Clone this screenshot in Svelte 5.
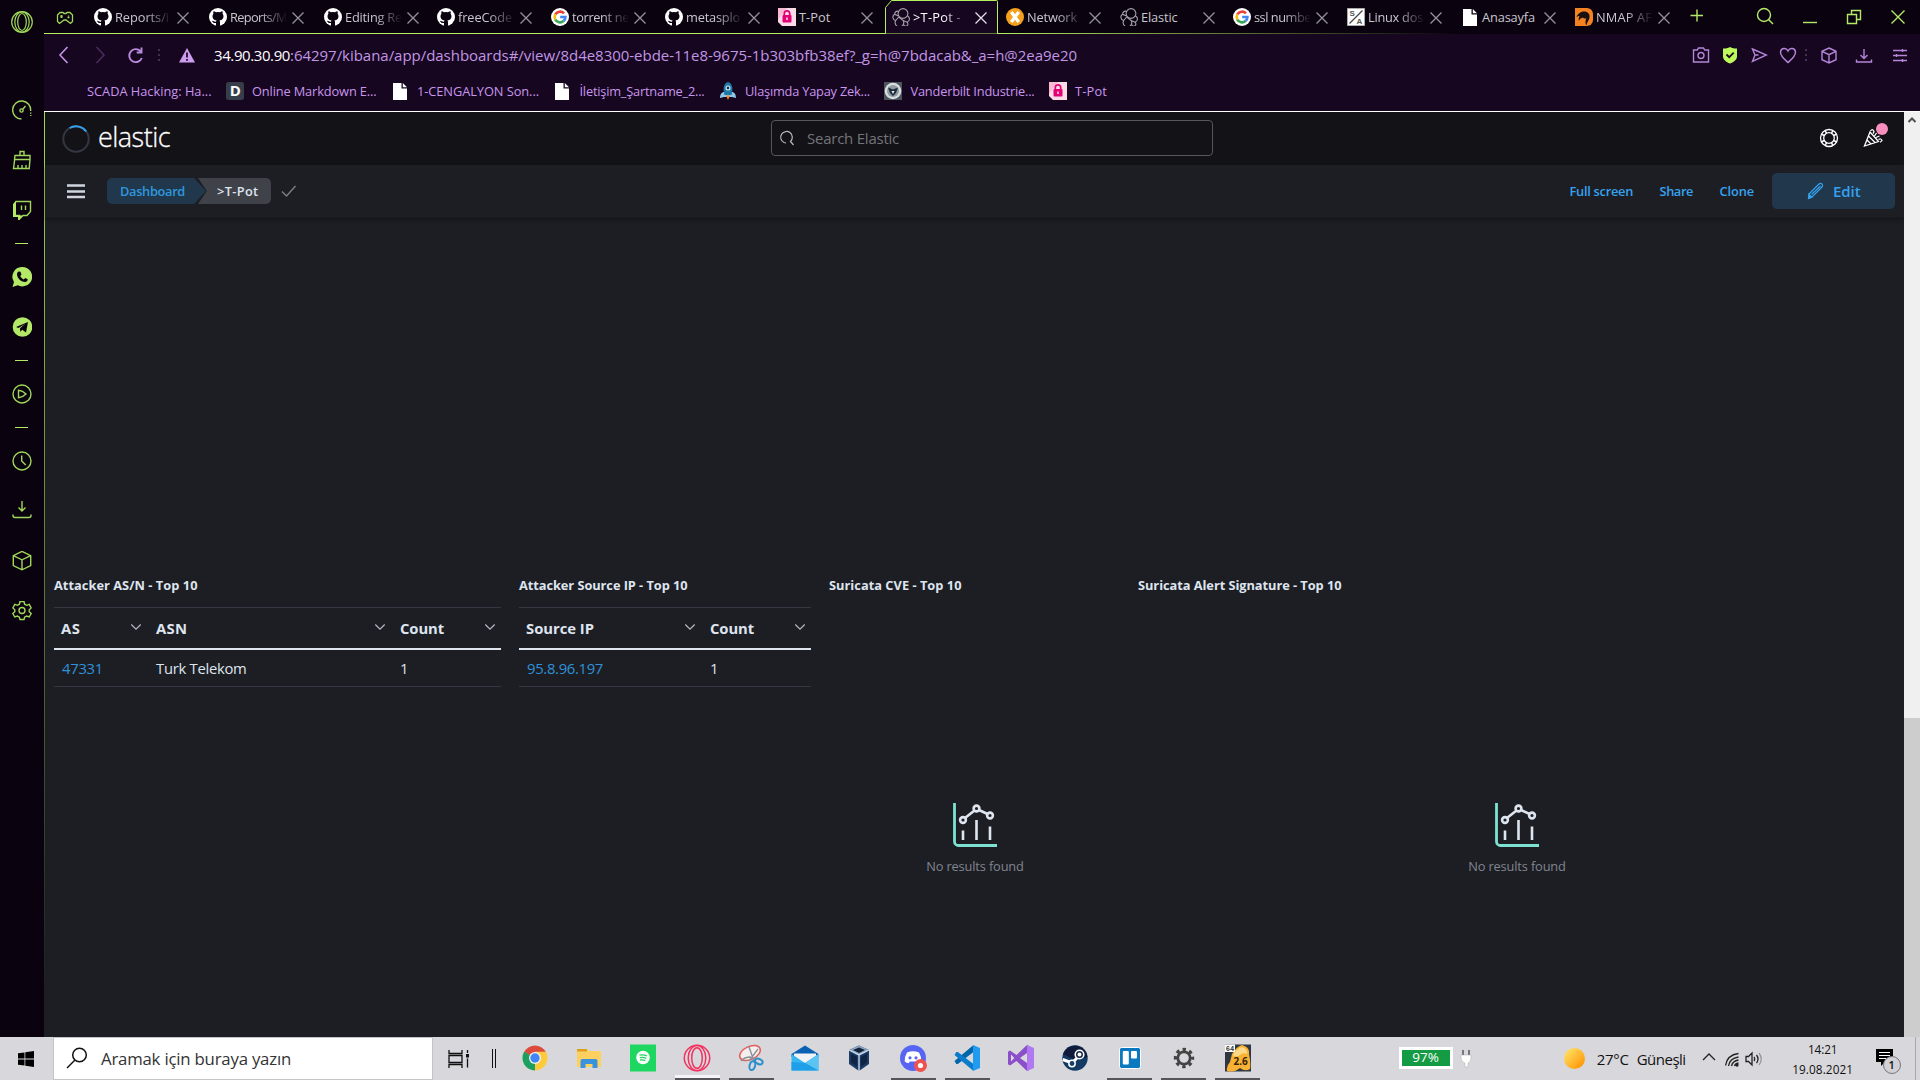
<script>
  // Tracks a text run out to a given pixel width through letter-spacing.
  function fit(node, width) {
    const natural = node.getBoundingClientRect().width;
    const count = [...node.textContent].length;
    node.style.letterSpacing = `${(width - natural) / count}px`;
  }

  const tabs = [
    { icon: 'github', text: 'Reports/i', w: 115, t: 54 },
    { icon: 'github', text: 'Reports/M', w: 115, t: 57 },
    { icon: 'github', text: 'Editing Re', w: 113, t: 57 },
    { icon: 'github', text: 'freeCode', w: 114, t: 54 },
    { icon: 'google', text: 'torrent ne', w: 114, t: 57 },
    { icon: 'github', text: 'metasplo', w: 113, t: 54 },
    { icon: 'tpot', text: 'T-Pot', w: 114, t: 31.5, full: true },
    { icon: 'elastic', text: '>T-Pot -', w: 114, t: 48, active: true },
    { icon: 'xorange', text: 'Network', w: 114, t: 50 },
    { icon: 'elastic', text: 'Elastic', w: 113, t: 36.5, full: true },
    { icon: 'google', text: 'ssl numbe', w: 114, t: 57 },
    { icon: 'sa', text: 'Linux dos', w: 114, t: 55 },
    { icon: 'page', text: 'Anasayfa', w: 114, t: 53, full: true },
    { icon: 'nmap', text: 'NMAP AF', w: 110, t: 56 }
  ];

  const bookmarks = [
    { icon: '', text: 'SCADA Hacking: Ha...', w: 124.5 },
    { icon: 'dillinger', text: 'Online Markdown E...', w: 124.5 },
    { icon: 'page', text: '1-CENGALYON Son...', w: 122 },
    { icon: 'page', text: 'İletişim_Şartname_2...', w: 125 },
    { icon: 'rocket', text: 'Ulaşımda Yapay Zek...', w: 125 },
    { icon: 'seal', text: 'Vanderbilt Industrie...', w: 124 },
    { icon: 'tpot', text: 'T-Pot', w: 32 }
  ];

  const side = ['gauge', 'broom', 'twitch', '-', 'whatsapp', 'telegram', '-', 'play', '-', 'clock', 'download', 'cube', 'gear'];

  const apps = [
    { icon: 'chrome' },
    { icon: 'explorer' },
    { icon: 'spotify' },
    { icon: 'opera', open: true, current: true },
    { icon: 'snip', open: true },
    { icon: 'mail' },
    { icon: 'vbox' },
    { icon: 'discord', open: true },
    { icon: 'vscode', open: true },
    { icon: 'vs' },
    { icon: 'steam' },
    { icon: 'trello', open: true },
    { icon: 'settings', open: true },
    { icon: 'app64', open: true }
  ];
</script>

{#snippet favicon(name)}
  <svg class="fav" viewBox="0 0 18 18" width="18" height="18">
    {#if name === 'github'}
      <circle cx="9" cy="9" r="9" fill="#fff" />
      <path d="M7 18v-3.100c-2.600.500-3.200-.900-4-2 1.700-.3 1.700 1.200 4 .8q.1-.8.6-1.200C4.500 12 3.500 10.300 3.500 8.200c0-1 .3-1.800.9-2.500-.3-.9-.2-1.700.1-2.400 1 .1 1.700.5 2.400 1a8 8 0 0 1 4.200 0c.7-.5 1.500-.9 2.400-1 .3.7.4 1.500.1 2.400.6.700.9 1.500.9 2.500 0 2.100-1 3.800-4.100 4.300q.7.600.6 2V18z" fill="#0b0410" />
    {:else if name === 'google'}
      <circle cx="9" cy="9" r="9" fill="#fff" />
      <g fill="none" stroke-width="2.600">
        <path d="M13 5.400A5.400 5.400 0 0 0 4.300 6.400" stroke="#ea4335" />
        <path d="M4.300 6.400a5.400 5.400 0 0 0 0 5.200" stroke="#fbbc05" />
        <path d="M4.300 11.600a5.400 5.400 0 0 0 8.200 1.500" stroke="#34a853" />
        <path d="M12.500 13.100A5.400 5.400 0 0 0 14.400 9H9.200" stroke="#4285f4" />
      </g>
    {:else if name === 'tpot'}
      <path d="M0 0h18v18H4L0 14z" fill="#fbdbe8" />
      <path d="M0 0h9L0 12z" fill="#f9b9d2" />
      <rect x="4.500" y="7" width="9" height="7.500" rx="1" fill="#e20074" />
      <path d="M6.300 8V5.500a2.700 2.700 0 0 1 5.400 0V8" fill="none" stroke="#e20074" stroke-width="1.700" />
      <path d="M9 9.500v2.500" stroke="#fff" stroke-width="1.300" />
    {:else if name === 'elastic'}
      <g fill="none" stroke="#a7a3ab" stroke-width="1.100">
        <circle cx="11" cy="5.500" r="4.900" />
        <path d="M6.500 3.500A2.600 2.600 0 0 0 2.700 6.300L6.500 8" />
        <path d="M2.700 6.300a3.300 3.300 0 0 0 1 6.200L6.700 9" />
        <path d="M15.500 8a3.300 3.300 0 0 1-.5 6.200l-3.800-1.700" />
        <path d="M3.700 12.500a4.300 4.300 0 1 0 7.500 0L6.700 9" />
        <path d="M11.500 15.800a2.200 2.200 0 1 0 3.500-1.600" />
      </g>
    {:else if name === 'xorange'}
      <circle cx="9" cy="9" r="9" fill="#f4a11d" />
      <path d="M5.300 4 12.700 14M12.700 4 5.300 14" stroke="#fff" stroke-width="3.200" />
    {:else if name === 'sa'}
      <path d="M.5.500h17v17H.5z" fill="#fff" stroke="#aaa" />
      <path d="M15.500 2.500l-13 13" stroke="#444" stroke-width="1.200" />
      <text x="2.500" y="8" class="sa">S</text><text x="9.500" y="16" class="sa">A</text>
    {:else if name === 'page'}
      <path d="M2 1h8.500v5.500H16V18H2z" fill="#fff" />
      <path d="M11.800 1 16 5.300h-4.200z" fill="#fff" />
    {:else if name === 'nmap'}
      <path d="M0 0h12a6 6 0 0 1 6 6v6a6 6 0 0 1-6 6H0z" fill="#f58220" />
      <path d="M1.500 9c1-3 4-5.500 7.500-5.500 4 0 6 2.500 5.500 6-.3 3-2.500 4-3 8-2-3-.5-5.500-.3-7.500-1.200 1-2.700.5-3.200-.5-1.500 1-3 .5-4 3.500-.8-2 0-4 .5-5-1.500 0-2 .5-3 1z" fill="#1a1010" />
    {:else if name === 'dillinger'}
      <rect width="18" height="18" rx="2.500" fill="#373d49" />
      <text x="3.700" y="14.300" class="dl">D</text>
    {:else if name === 'rocket'}
      <path d="M1 16c0-4 2-6 4-6h8c2 0 4 2 4 6l-4-1H5z" fill="#8fc7e8" />
      <path d="M9 0c4 1 5.500 6 3.500 13h-7C3.500 6 5 1 9 0z" fill="#1e78a8" />
      <circle cx="9" cy="6" r="2.500" fill="#d8f0fa" /><circle cx="9" cy="6" r="1.400" fill="#0c3550" />
      <path d="M7 13.500h4L9 18z" fill="#f58a2a" />
    {:else if name === 'seal'}
      <rect width="18" height="18" fill="#4c555b" />
      <circle cx="9" cy="9" r="8.300" fill="#d7dde0" /><circle cx="9" cy="9" r="6" fill="#8f9aa1" />
      <path d="M4 5.500 9 7.500 14 5.500 12 11l-3 3-3-3z" fill="#1d2c3c" /><path d="M7.500 9h3L9 12z" fill="#eef" />
    {/if}
  </svg>
{/snippet}

{#snippet sideIcon(name)}
  <svg class="sicon" viewBox="0 0 20 20" width="20" height="20">
    {#if name === 'gauge'}
      <path d="M9.500 19A9 9 0 1 1 18.600 11" /><path d="M18.700 12.500v1.200M18.700 15v1" /><circle cx="9.500" cy="10.500" r="1.600" /><path d="M10.800 9.200 13.500 6" />
    {:else if name === 'broom'}
      <path d="M8 5.500V1.500h4v4M3 5.500h15v4H2.500zM2.700 9.500 1.500 18.500h15.700l.8-9M6 18v-3M10 18v-3M14 18v-3" />
    {:else if name === 'twitch'}
      <path d="M4 1.500h14.500v10L15 15.500h-4L7.500 19v-3.500H3V3z" /><path class="solid" d="M1 4 4 1v14l3 .5h3.500L7 20H6v-3H1z" /><path d="M9.500 5.500v4.500M13.500 5.500v4.500" />
    {:else if name === 'whatsapp'}
      <path class="solid" d="M10.500 0a9.700 9.700 0 1 1-4.700 18.200L.5 20l1.500-5A9.700 9.700 0 0 1 10.500 0z" /><path class="cut" d="M6.500 4.500l2 .3 1 3-1.300 1.300c.8 1.600 1.900 2.600 3.500 3.300l1.500-1.500 2.500 1.400c.2 1.300-1 2.700-2.500 2.700C8.500 15 5.200 10.500 5 7.500c0-1.200.6-2.300 1.500-3z" />
    {:else if name === 'telegram'}
      <circle class="solid" cx="10.500" cy="10" r="9.800" /><path class="cut" d="M4 10 16 5l-2 10.500-3.700-2.700-2 2-.3-3.500L13 7l-6.500 4z" />
    {:else if name === 'play'}
      <circle cx="10" cy="10" r="9" /><path d="M6.500 6.300c3 .3 5 1.200 7.500 3.700-2.500 2.500-4.500 3.400-7.500 3.700z" />
    {:else if name === 'clock'}
      <circle cx="10" cy="10" r="9" /><path d="M9.700 4.500V10l4 4" />
    {:else if name === 'download'}
      <path d="M10 0v9.500M6.500 6.500 10 10l3.500-3.500M1 13.500v1a2 2 0 0 0 2 2h14a2 2 0 0 0 2-2v-1" />
    {:else if name === 'cube'}
      <path d="M10 .4 18.700 4.600v10L10 18.800 1.300 14.600V4.600zM1.300 4.600 10 8.800 18.700 4.600M10 8.800v10" />
    {:else if name === 'gear'}
      <circle cx="10" cy="9.500" r="3" /><path d="M8 .5h4l.6 2.700 2 1.100 2.600-.9 2 3.500-2 1.800v2l2 1.800-2 3.500-2.600-.9-2 1.100-.6 2.300H8l-.6-2.300-2-1.100-2.600.9-2-3.500 2-1.800v-2l-2-1.800 2-3.500 2.600.9 2-1.100z" />
    {/if}
  </svg>
{/snippet}

{#snippet appIcon(name)}
  <svg viewBox="0 0 28 28" width="28" height="28">
    {#if name === 'chrome'}
      <path d="M14 14 3.200 7.700A12.500 12.500 0 0 1 24.800 7.700z" fill="#db4a3d" />
      <path d="M14 14 24.900 7.800A12.500 12.500 0 0 1 14 26.500z" fill="#fdca3b" />
      <path d="M14 14 14 26.500A12.500 12.500 0 0 1 3.100 7.800z" fill="#1da05e" />
      <path d="M14 7.800h10.900l-5.300 9z" fill="#fdca3b" /><path d="M8.600 16.900 3.200 7.800 14 14z" fill="#1da05e" />
      <circle cx="14" cy="14" r="6" fill="#f4f4f4" /><circle cx="14" cy="14" r="4.700" fill="#4286f5" />
    {:else if name === 'explorer'}
      <path d="M2 5h10l1.500 2H25a1 1 0 0 1 1 1v15H2z" fill="#fdd060" /><path d="M2 5h10v2.500H2z" fill="#dda018" />
      <path d="M5.500 24v-7a2 2 0 0 1 2-2h13a2 2 0 0 1 2 2v7h-5v-4h-7v4z" fill="#3a92dd" />
    {:else if name === 'spotify'}
      <path d="M1 .5h26v27H1z" fill="#1ed760" /><circle cx="14" cy="13.500" r="6.800" fill="#fff" />
      <path d="M10.500 11.200q4-1 7.500.8M10.800 13.700q3.500-.8 6.500.7M11 16q3-.6 5.300.6" fill="none" stroke="#1ed760" stroke-width="1.300" />
    {:else if name === 'opera'}
      <g fill="none" stroke="#f4315f" stroke-width="1.500"><circle cx="14" cy="14" r="12.700" /><ellipse cx="14" cy="14" rx="8.800" ry="12.500" /><ellipse cx="14" cy="14" rx="5.300" ry="10.300" /></g>
    {:else if name === 'snip'}
      <ellipse cx="13" cy="9" rx="11" ry="6.500" transform="rotate(-25 13 9)" fill="#f4eeee" stroke="#e0605c" stroke-width="1.500" />
      <path d="M4 17q3-4 10-4M12 3l5 14M21 5l-9 12" stroke="#8a9299" stroke-width="1.400" fill="none" />
      <g fill="none" stroke="#2b8fcb" stroke-width="2"><ellipse cx="15.500" cy="21.500" rx="2.800" ry="4.500" transform="rotate(15 15 21)" /><ellipse cx="22" cy="17.500" rx="4" ry="2.500" transform="rotate(25 22 17)" /></g>
    {:else if name === 'mail'}
      <path d="M.5 10 14 1.500 27.500 10v3H.5z" fill="#0b62b5" /><path d="M3 9.500h22v3L14 19.500 3 12.500z" fill="#f0f2f5" />
      <path d="M.5 10 14 19l13.500-9v16.500H.5z" fill="#37b6f0" /><path d="m14 19 13.500 7.500V10z" fill="#5cc4f2" /><path d="M.5 26.500V18L14 19l13.500 7.500z" fill="#1f9fe8" />
    {:else if name === 'vbox'}
      <path d="M14 1.500 24 6v14l-10 7L4 20V6z" fill="#1c3a66" /><path d="M14 1.500 24 6l-10 5L4 6z" fill="#8fa5bf" /><path d="M14 3.500 20 6l-6 3-6-3z" fill="#10213d" />
      <path d="M14 11v16M4 6l10 5 10-5" stroke="#d5e0ee" stroke-width="1.300" fill="none" /><path d="M6 9.500 12 13v9.500L6 18.500zM22 9.500 16 13v9.500l6-4z" fill="#122443" />
    {:else if name === 'discord'}
      <circle cx="14" cy="14" r="13" fill="#5865f2" />
      <path d="M8 8.500q6-2.500 12 0 2.500 4 2.300 9-2 1.500-4 1.700l-1-1.700h-6.600l-1 1.700q-2-.2-4-1.700Q5.500 12.500 8 8.500z" fill="#fff" />
      <circle cx="11" cy="13.800" r="1.600" fill="#5865f2" /><circle cx="17" cy="13.800" r="1.600" fill="#5865f2" />
      <circle cx="21.500" cy="21.500" r="6.500" fill="#f0524f" /><circle cx="21.500" cy="21.500" r="2.600" fill="#fff" />
    {:else if name === 'vscode'}
      <path d="M20.500 1 1.500 17l1.800 3h1.500L20.500 8z" fill="#0065a9" /><path d="M20.500 27 1.500 11l1.800-3h1.500L20.500 20z" fill="#0a7ccb" /><path d="m20 1 7 3v20l-7 3z" fill="#1f9cf0" />
    {:else if name === 'vs'}
      <path d="M20 1 9.500 11 3 6.500 1 7.800v12.400l2 1.300L9.500 17 20 27l3-1.500V2.500z" fill="#8a4fc9" /><path d="m20 1 7 3v20l-7 3z" fill="#b179f1" />
      <path d="M4 10.500v7L7.300 14zM20 9v10l-7-5z" fill="#dad9de" />
    {:else if name === 'steam'}
      <circle cx="14" cy="14" r="12.700" fill="#123a63" /><path d="M2 10A12.700 12.700 0 0 1 26.500 13L14 16z" fill="#101a3a" />
      <path d="M1.800 15.500 11 19l5-5" stroke="#fff" stroke-width="3" fill="none" />
      <circle cx="18.500" cy="10.500" r="4.300" fill="#15284a" stroke="#fff" stroke-width="1.600" /><circle cx="18.500" cy="10.500" r="2" fill="#fff" />
      <circle cx="11" cy="19.500" r="3.200" fill="#15406b" stroke="#fff" stroke-width="1.500" />
    {:else if name === 'trello'}
      <rect x="3.500" y="3.500" width="21" height="21" rx="2" fill="#0a79bf" stroke="#fff" /><rect x="6.800" y="7" width="6" height="13.500" rx="1" fill="#fff" /><rect x="15" y="7" width="6" height="7.500" rx="1" fill="#fff" />
    {:else if name === 'settings'}
      <circle cx="14" cy="14" r="6.200" fill="none" stroke="#444" stroke-width="2.800" /><circle cx="14" cy="14" r="8.500" fill="none" stroke="#444" stroke-width="3.400" stroke-dasharray="3.300 3.376" stroke-dashoffset="1.650" />
    {:else if name === 'app64'}
      <path d="M1 .5h26v27H1z" fill="#2f3742" /><path d="M3 27q-1-5 3-9l2-8q5-8 10-9 8 2 7 9 2 9 1 15-5 3-10-1-6 5-13 3z" fill="#f9b233" />
      <path d="M9 11q4-7 9-8 6 2 5 7-4-2-7 1-5 3-7 0z" fill="#fcd989" />
      <path d="M1 .5h10v7.500H1z" fill="#fff" /><text x="1.800" y="7" class="n64">64</text><text x="9.500" y="21" class="n26">2.6</text>
    {/if}
  </svg>
{/snippet}

{#snippet chevron()}
  <svg class="chev" viewBox="0 0 12 12" width="12" height="12"><path d="m1.300 3.500 4.700 4.700 4.700-4.700" /></svg>
{/snippet}

{#snippet empty()}
  <div class="empty">
    <svg viewBox="0 0 44 44" width="44" height="44">
      <path d="M1.500 0v38.500a4 4 0 0 0 4 4H44" fill="none" stroke="#7de2d1" stroke-width="2.800" />
      <g fill="none" stroke="#dfe5ef" stroke-width="2.600"><path d="M10 27.500V37M23.500 17v20M37 23.500V37" /><circle cx="10" cy="17" r="2.900" /><circle cx="23.500" cy="5.500" r="2.900" /><circle cx="37" cy="12.500" r="2.900" /><path d="m12 15 9.500-7.500M26 7l8.500 4" /></g>
    </svg>
    <span><span class="fit" use:fit={97.5}>No results found</span></span>
  </div>
{/snippet}

<div class="screen">
  <div class="browser">
    <aside class="side">
      <div class="opera">
        <svg class="sicon" viewBox="0 0 24 24" width="24" height="24"><circle cx="12" cy="12" r="10.300" /><ellipse cx="12" cy="12" rx="7.200" ry="10.200" /><ellipse cx="12" cy="12" rx="4.300" ry="8.500" /></svg>
      </div>
      {#each side as name}
        {#if name === '-'}<div class="dash"></div>{:else}<div class="slot">{@render sideIcon(name)}</div>{/if}
      {/each}
    </aside>

    <div class="main">
      <header class="tabbar">
        <svg class="pad" viewBox="0 0 18 14" width="18" height="14"><path d="M4 1.500h3l1 1h2l1-1h3l2.500 2.500v6.500l-2 2-4.500-3.500H8l-4.500 3.500-2-2V4zM4.500 4.500l2 2m0-2-2 2M11.500 6.500h2M12.500 5.500v-1" /></svg>
        {#each tabs as tab}
          <div class="tab" class:active={tab.active} style:width="{tab.w}px">
            {#if tab.active}
              <svg class="outline" viewBox="0 0 114 34" width="114" height="34"><path d="M0 33.500h.5V7.500l6-7h105a1 1 0 0 1 1 1v32h1.500" /></svg>
            {/if}
            {@render favicon(tab.icon)}
            <span class="label" class:full={tab.full}><span class="fit" use:fit={tab.t}>{tab.text}</span></span>
            <svg class="x" viewBox="0 0 12 12" width="12" height="12"><path d="m.5.500 11 11m0-11-11 11" /></svg>
          </div>
        {/each}
        <svg class="green plus" viewBox="0 0 14 14" width="14" height="14"><path d="M7 .5v12M.5 6.500h12.500" /></svg>
        <svg class="green find" viewBox="0 0 18 18" width="18" height="18"><circle cx="8" cy="8" r="6.500" /><path d="m12.500 12.500 4.500 4.500" /></svg>
        <svg class="green win" viewBox="0 0 16 16" width="16" height="16"><path d="M1 13.500h14" /></svg>
        <svg class="green win" viewBox="0 0 16 16" width="16" height="16"><path d="M1.500 5.500h9v9h-9zM5.500 5V1.500h9v9H11" /></svg>
        <svg class="green win" viewBox="0 0 16 16" width="16" height="16"><path d="m1.500 1.500 13 13m0-13-13 13" /></svg>
      </header>

      <nav class="address">
        <svg class="nav" viewBox="0 0 16 18" width="16" height="18"><path d="M11.500 1 4 9l7.500 8" /></svg>
        <svg class="nav fwd" viewBox="0 0 16 18" width="16" height="18"><path d="m4.500 1 7.500 8-7.500 8" /></svg>
        <svg class="nav reload" viewBox="0 0 16 18" width="16" height="18"><path d="M13.500 5.200A6.500 6.500 0 1 0 14.800 12M14.500 1.500v5H9.700" /></svg>
        <i class="dots"></i>
        <svg class="warn" viewBox="0 0 16 16" width="16" height="16"><path d="M8 1 16 15.500H0z" fill="#cf9df0" /><path d="M8 5.500v5M8 12v1.800" stroke="#16061f" stroke-width="1.700" /></svg>
        <span class="url"><b class="fit" use:fit={76}>34.90.30.90</b><span class="fit" use:fit={787}>:64297/kibana/app/dashboards#/view/8d4e8300-ebde-11e8-9675-1b303bfb38ef?_g=h@7bdacab&amp;_a=h@2ea9e20</span></span>
        <div class="tools">
          <svg viewBox="0 0 18 18" width="18" height="18"><path d="M1.500 4h3.800l1.200-2h5l1.200 2h3.800v12h-15z" /><circle cx="9" cy="9.500" r="3" /></svg>
          <svg viewBox="0 0 18 18" width="18" height="18"><path d="M9 1c2 1 4 1.500 7 1.500v8c0 3-3 5.500-7 7-4-1.500-7-4-7-7v-8C5 2.500 7 2 9 1z" fill="#bdf95b" stroke="none" /><path d="m5.500 8.500 2.700 2.700 4.500-4.500" stroke="#1a0a22" stroke-width="1.800" /></svg>
          <svg viewBox="0 0 18 18" width="18" height="18"><path d="m2.500 3 14 6-14 6.500 2.500-6.500zM5 9h3.500" /></svg>
          <svg viewBox="0 0 18 18" width="18" height="18"><path d="M9 16.500C5 13 1.500 10.500 1.500 6.300c0-4.300 5.700-5.300 7.500-1.300 1.800-4 7.500-3 7.500 1.300C16.500 10.500 13 13 9 16.500z" /></svg>
          <i class="dots tight"></i>
          <svg class="cube" viewBox="0 0 18 18" width="18" height="18"><path d="m9 2 7 3.300v8.400L9 17l-7-3.300V5.300zM2 5.300l7 3.400 7-3.400M9 8.700V17" /></svg>
          <svg class="dl-i" viewBox="0 0 18 18" width="18" height="18"><path d="M9 3v9M5.500 9 9 12.500 12.500 9M1.500 13.500V16h15v-2.500" /></svg>
          <svg class="set" viewBox="0 0 18 18" width="18" height="18"><path d="M2 4.500h14M2 9.500h14M2 14.500h14M11.500 3v3M5.500 8v3M11.500 13v3" /></svg>
        </div>
      </nav>

      <div class="bookmarks">
        {#each bookmarks as mark}
          <span class="mark">{#if mark.icon}{@render favicon(mark.icon)}{/if}<span class="fit" use:fit={mark.w}>{mark.text}</span></span>
        {/each}
      </div>

      <div class="viewport">
        <div class="kibana">
          <div class="ehead">
            <div class="brand">
              <svg viewBox="0 0 28 28" width="28" height="28"><circle cx="14" cy="14" r="12.700" fill="none" stroke="#343741" stroke-width="2" /><path d="M7.700 3A12.700 12.700 0 0 1 24.200 6.500" fill="none" stroke="#36a2ef" stroke-width="2" /></svg>
              <span class="fit" use:fit={72}>elastic</span>
            </div>
            <div class="search">
              <svg viewBox="0 0 16 16" width="16" height="16"><path d="M5 12.500A5.800 5.800 0 1 1 11.500 11.500L14.500 15M5 12.500l2 .5" /></svg>
              <span class="fit" use:fit={92}>Search Elastic</span>
            </div>
            <div class="eicons">
              <svg viewBox="0 0 20 20" width="20" height="20"><circle cx="10" cy="10" r="8.500" /><circle cx="10" cy="10" r="5.300" /><path d="M2.500 6.200 5.500 7.500M6.200 2.500l1.300 3M17.500 6.200l-3 1.300M13.800 2.500l-1.300 3M2.500 13.800l3-1.300M6.200 17.500l1.300-3M17.500 13.800l-3-1.300M13.800 17.500l-1.300-3" stroke-width="1.500" /></svg>
              <div class="news">
                <svg viewBox="0 0 20 20" width="20" height="20"><path d="M7 4 1.500 18 15.500 13.500zM5.500 8l6.500 6.500M4 12l4 4M7.500 3q2-3 3.500.5-.5 1.500-1 2M13.500 5l-2 3M13 9.500l3.500-1.500M15.500 11.500q2.500-1.500 3.500 1-1 1.500-2 1.500" /></svg>
                <i></i>
              </div>
            </div>
          </div>

          <div class="ebar">
            <svg class="burger" viewBox="0 0 18 16" width="18" height="16"><path d="M0 2.500h18M0 8.500h18M0 14h18" /></svg>
            <div class="crumb home"><span class="fit" use:fit={65}>Dashboard</span></div>
            <div class="crumb here"><span class="fit" use:fit={41.5}>&gt;T-Pot</span></div>
            <svg class="tick" viewBox="0 0 16 12" width="16" height="12"><path d="m1 6.500 4.500 4.500L14.500 1" /></svg>
            <div class="links">
              <span><span class="fit" use:fit={63.5}>Full screen</span></span>
              <span><span class="fit" use:fit={33.5}>Share</span></span>
              <span><span class="fit" use:fit={34.5}>Clone</span></span>
            </div>
            <button class="edit">
              <svg viewBox="0 0 18 18" width="18" height="18"><path d="M2 12 12 2q1.500-1.200 3 0 1.300 1.500 0 3L5.500 14.500 2 16zM4.500 12.500 13.500 4" /><path d="m2 12.500 3 2.500-3.500 1.500z" fill="#36a2ef" /></svg>
              <span class="fit" use:fit={27.500}>Edit</span>
            </button>
          </div>

          <div class="board">
            <section class="p1">
              <h2><span class="fit" use:fit={143.5}>Attacker AS/N - Top 10</span></h2>
              <div class="row head">
                <div><span class="fit" use:fit={19.5}>AS</span>{@render chevron()}</div>
                <div><span class="fit" use:fit={31.5}>ASN</span>{@render chevron()}</div>
                <div><span class="fit" use:fit={44}>Count</span>{@render chevron()}</div>
              </div>
              <div class="row">
                <div class="link"><span class="fit" use:fit={41}>47331</span></div>
                <div><span class="fit" use:fit={90.5}>Turk Telekom</span></div>
                <div>1</div>
              </div>
            </section>
            <section class="p2">
              <h2><span class="fit" use:fit={168.5}>Attacker Source IP - Top 10</span></h2>
              <div class="row head">
                <div><span class="fit" use:fit={68}>Source IP</span>{@render chevron()}</div>
                <div><span class="fit" use:fit={44}>Count</span>{@render chevron()}</div>
              </div>
              <div class="row">
                <div class="link"><span class="fit" use:fit={76}>95.8.96.197</span></div>
                <div>1</div>
              </div>
            </section>
            <section class="p3">
              <h2><span class="fit" use:fit={132.5}>Suricata CVE - Top 10</span></h2>
              {@render empty()}
            </section>
            <section class="p4">
              <h2><span class="fit" use:fit={203.5}>Suricata Alert Signature - Top 10</span></h2>
              {@render empty()}
            </section>
          </div>
        </div>
        <div class="scroll">
          <svg viewBox="0 0 10 8" width="10" height="8"><path d="M1.500 6 5 2.500 8.500 6" fill="none" stroke="#505050" stroke-width="2" /></svg>
          <div class="thumb"></div>
        </div>
      </div>
    </div>
  </div>

  <footer class="taskbar">
    <svg class="start" viewBox="0 0 16 16" width="16" height="16"><path d="M0 2.300 6.500 1.400v6.200H0zM7.300 1.300 16 0v7.600H7.300zM0 8.400h6.500v6.200L0 13.700zM7.300 8.400H16V16l-8.700-1.300z" /></svg>
    <div class="find-box">
      <svg viewBox="0 0 22 22" width="22" height="22"><circle cx="13.500" cy="8" r="6.800" /><path d="M9 13 1 21" /></svg>
      <span class="fit" use:fit={190}>Aramak için buraya yazın</span>
    </div>
    <svg class="taskview" viewBox="0 0 22 20" width="22" height="20"><path d="M1 1v3.500h13V1M1 19v-3.500h13V19M1 6.500h13v7H1zM19.500 1v3M19.500 9.500v9" /><path d="M18 5h3v3.500h-3z" fill="#111" stroke="none" /></svg>
    <div class="bars"></div>
    <div class="apps">
      {#each apps as app}
        <div class="app" class:open={app.open} class:current={app.current}>{@render appIcon(app.icon)}</div>
      {/each}
    </div>
    <div class="battery"><span>97%</span></div>
    <svg class="plug" viewBox="0 0 12 18" width="12" height="18"><path d="M3 0v5M9 0v5" stroke="#777" stroke-width="2" /><path d="M1 5h10v3q0 4-3 5v4H5v-4Q1 12 1 8z" fill="#fff" stroke="#aaa" stroke-width=".5" /></svg>
    <div class="sun"></div>
    <span class="weather"><span class="fit" use:fit={32}>27°C</span><span class="fit" use:fit={49}>Güneşli</span></span>
    <svg class="tray up" viewBox="0 0 14 10" width="14" height="10"><path d="m1 8 6-6 6 6" /></svg>
    <svg class="tray wifi" viewBox="0 0 16 16" width="16" height="16"><path d="M1.500 14.500Q3 4 14.500 2.500M4.500 15q1-7.500 10-9M7.500 15q1-5 7-6M10.500 15q.5-2.500 4-3" /><circle cx="13" cy="14" r="1" fill="#111" /></svg>
    <svg class="tray vol" viewBox="0 0 18 16" width="18" height="16"><path d="M1 5.500h2.500L7 2v12l-3.500-3.500H1zM9 6q1.500 2 0 4M11.500 4q3 4 0 8" /><path d="M14 2q4.500 6 0 12" stroke="#999" /></svg>
    <div class="clock">
      <span><span class="fit" use:fit={29.5}>14:21</span></span>
      <span><span class="fit" use:fit={61}>19.08.2021</span></span>
    </div>
    <div class="note">
      <svg viewBox="0 0 18 18" width="18" height="18"><path d="M0 0h17v13H9l-4 4v-4H0z" /><path d="M3 3.500h11M3 6.500h11M3 9.500h7" stroke="#fff" stroke-width="1.200" /></svg>
      <b>1</b>
    </div>
    <div class="peek"></div>
  </footer>
</div>

<style>
  :global(body) { background: #1d1e24; overflow: hidden; }
  .screen { width: 1920px; height: 1080px; display: flex; flex-direction: column; font-family: 'Open Sans', 'Noto Sans', sans-serif; color: #dfe5ef; overflow: hidden; }
  .screen *, .screen { box-sizing: border-box; }
  svg { display: block; flex: none; }
  .fit { display: inline-block; white-space: pre; }
  .browser { height: 1037px; display: flex; background: #0a030f; }

  .side { width: 44px; flex: none; background: #0a030f; }
  .opera { height: 85px; padding: 10px 0 0 10px; }
  .slot { height: 50px; display: flex; align-items: center; padding-left: 12px; }
  .dash { height: 17px; display: flex; align-items: center; padding-left: 15px; }
  .dash::after { content: ''; width: 13px; height: 1px; background: #b4e968; }
  .sicon { fill: none; stroke: #a0d75a; stroke-width: 1.400; }
  .opera .sicon { stroke-width: 1.200; }
  .sicon .solid { fill: #b4e968; stroke: none; }
  .sicon .cut { fill: #0a030f; stroke: none; }

  .main { flex: 1; min-width: 0; display: flex; flex-direction: column; }
  .tabbar { height: 34px; flex: none; display: flex; align-items: center; background: linear-gradient(90deg, #b6f05f 950px, rgba(182, 240, 95, 0) 1410px) 0 33px / 100% 1px no-repeat, #0a030f; }
  .pad { margin: 1px 13px 0 12px; fill: none; stroke: #a0d75a; stroke-width: 1.300; }
  .tab { height: 34px; flex: none; display: flex; align-items: center; padding-left: 7px; position: relative; font-size: 12.800px; color: #c9c6cc; }
  .label { width: 58px; margin-left: 3px; white-space: pre; mask-image: linear-gradient(90deg, #000 52%, transparent 99%); line-height: 20px; padding-bottom: 1px; }
  .label.full { mask-image: none; }
  .x { margin: 1px 0 0 4px; fill: none; stroke: #96929a; stroke-width: 1.300; }
  .active { color: #fff; }
  .outline { position: absolute; left: 0; top: 0; fill: #16061f; stroke: #b6f05f; stroke-width: 1; }
  .active .fav, .active .label, .active .x { position: relative; }
  .active .x { stroke: #e4dfe8; }
  .green { fill: none; stroke: #b4e968; stroke-width: 1.400; }
  .plus { margin: -3px 0 0 12px; }
  .find { margin: -2px 0 0 52px; }
  .win { margin-left: 28px; }

  .address { height: 42px; flex: none; display: flex; align-items: center; background: #16061f; }
  .nav { margin-left: 12px; fill: none; stroke: #c493e8; stroke-width: 1.600; }
  .nav:first-child { margin-top: -1px; }
  .nav.fwd { margin: -1px 0 0 20px; stroke: #4a2a60; }
  .nav.reload { margin-left: 19px; stroke: #b98ade; stroke-width: 1.900; }
  .dots { width: 2px; height: 12px; margin-left: 15px; flex: none; background: repeating-linear-gradient(#44334e 0 2px, transparent 2px 5px); }
  .warn { margin-left: 19px; }
  .url { margin-left: 19px; display: flex; font-size: 15px; color: #c196e4; line-height: 22px; }
  .url b { color: #fff; font-weight: 400; }
  .tools { margin-left: auto; display: flex; align-items: center; gap: 11px; padding-right: 11px; }
  .tools svg { fill: none; stroke: #b585da; stroke-width: 1.400; }
  .dots.tight { margin: 0 2px 0 -3px; }
  .tools .dl-i { margin-left: 6px; }
  .tools .set { margin-left: 7px; }

  .bookmarks { height: 35px; flex: none; display: flex; gap: 14px; padding: 0 0 6px 43px; align-items: center; background: #16061f; font-size: 12.800px; color: #c896ee; }
  .mark { display: flex; align-items: center; gap: 8.500px; line-height: 20px; }
  .sa { font: bold 8px 'Liberation Sans', sans-serif; fill: #555; }
  .dl { font: bold 15px 'Open Sans', sans-serif; fill: #fff; }

  .viewport { flex: 1; display: flex; border-top: 1px solid #fff; min-height: 0; }
  .kibana { flex: 1; display: flex; flex-direction: column; background: #1d1e24; border-left: 1px solid; border-image: linear-gradient(#a0d956, #5f7e35 50%, #1d1e24 95%) 1; }
  .ehead { height: 53px; flex: none; display: flex; align-items: center; background: #131217; }
  .brand { width: 726px; padding-left: 17px; display: flex; align-items: center; gap: 8px; font: 400 27px/40px 'Open Sans', 'Noto Sans', sans-serif; color: #fff; }
  .brand .fit { margin-top: -3px; font-weight: 300; -webkit-text-stroke: 0.300px #fff; }
  .search { width: 442px; height: 36px; margin-top: -2px; border: 1px solid #55565b; border-radius: 4px; display: flex; align-items: center; padding-left: 7px; gap: 12px; font-size: 15px; color: #73747a; }
  .search svg { fill: none; stroke: #b8b9bd; stroke-width: 1.200; }
  .eicons { margin: -1px 0 0 auto; padding-right: 21px; display: flex; gap: 24px; }
  .eicons svg { fill: none; stroke: #fff; stroke-width: 1.300; }
  .news { position: relative; }
  .news i { position: absolute; left: 13px; top: -5px; width: 12px; height: 12px; border-radius: 50%; background: #f68fbe; }

  .ebar { height: 53px; flex: none; display: flex; align-items: center; background: #1d1e24; border-bottom: 1px solid #18191d; box-shadow: 0 2px 4px rgba(0, 0, 0, 0.3); font-size: 12.800px; font-weight: 600; }
  .burger { margin: 0 22px; stroke: #d0d5df; stroke-width: 2.300; }
  .crumb { height: 26px; display: flex; align-items: center; }
  .home { width: 99px; padding-left: 13px; background: #20374c; color: #2f97de; border-radius: 5px 0 0 5px; clip-path: polygon(0 0, 88% 0, 100% 50%, 88% 100%, 0 100%); }
  .here { width: 73px; margin-left: -8px; padding-left: 19px; background: #404249; border-radius: 0 5px 5px 0; clip-path: polygon(0 0, 100% 0, 100% 100%, 0 100%, 12% 50%); }
  .tick { margin-left: 10px; fill: none; stroke: #7d8089; stroke-width: 1.300; }
  .links { margin-left: auto; display: flex; gap: 26.500px; color: #36a2ef; }
  .edit { width: 123px; height: 36px; margin: 0 9px 0 18px; border: 0; border-radius: 5px; background: #20374c; color: #36a2ef; display: flex; align-items: center; padding: 0 0 0 35px; gap: 8px; font: 600 15px 'Open Sans', sans-serif; }
  .edit svg { fill: none; stroke: #36a2ef; stroke-width: 1.200; }

  .board { flex: 1; display: grid; grid-template-columns: 465px 310px 309px 1fr; padding: 355px 0 0 9px; }
  section { display: flex; flex-direction: column; }
  h2 { margin: 0; font-size: 12.800px; line-height: 24px; font-weight: 700; height: 34px; }
  .row { display: grid; grid-template-columns: 94px 244px 109px; width: 447px; height: 37px; font-size: 14.800px; }
  .p2 .row { grid-template-columns: 183px 109px; width: 292px; }
  .row > div { display: flex; align-items: center; padding: 0 0 1px 8px; border-bottom: 1px solid #343741; }
  .row.head { height: 43px; border-top: 1px solid #343741; font-weight: 700; }
  .row.head > div { justify-content: space-between; border-bottom: 2px solid #dfe5ef; padding-right: 5px; }
  .row.head > div:first-child { padding: 0 6px 1px 7px; }
  .row .link { color: #2f92d8; }
  .p1 .row.head > div:nth-child(2) { padding-right: 6px; }
  .chev { fill: none; stroke: #b4b9c4; stroke-width: 1.200; margin-top: -1px; }
  .empty { display: flex; flex-direction: column; align-items: center; gap: 9px; padding: 196px 17px 0 0; font-size: 12.800px; line-height: 20px; color: #81858f; }
  .p4 .empty { padding-right: 8px; }

  .scroll { width: 16px; flex: none; background: #f0f0f0; display: flex; flex-direction: column; align-items: center; justify-content: space-between; padding-top: 4px; }
  .thumb { width: 16px; height: 319px; background: #cdcdcd; }

  .taskbar { height: 43px; display: flex; align-items: center; background: #d8d8dc; color: #111; }
  .start { margin: 0 19px 0 18px; }
  .find-box { width: 380px; height: 43px; border: 1px solid #c4c4c8; background: #fff; display: flex; align-items: center; padding-left: 12px; gap: 13px; font-size: 16.800px; color: #333; }
  .find-box svg { fill: none; stroke: #111; stroke-width: 1.500; margin-top: -2px; }
  .taskview { margin-left: 15px; fill: none; stroke: #111; stroke-width: 1.300; }
  .bars { width: 4px; height: 19px; margin: 0 12px 0 22px; border: solid #111; border-width: 0 1px; }
  .apps { display: flex; height: 43px; }
  .app { width: 54.050px; display: flex; justify-content: center; align-items: center; padding-bottom: 1px; }
  .app.open { background: linear-gradient(#55555a, #55555a) center bottom / 45px 2px no-repeat; }
  .app.current { background: linear-gradient(#55555a, #55555a) center bottom / 45px 2px no-repeat, linear-gradient(#f4f4f6, #f4f4f6) center bottom / 45px 5px no-repeat; }
  .n64 { font: bold 7px 'Liberation Mono', monospace; fill: #333; }
  .n26 { font: bold 10px 'Open Sans', sans-serif; fill: #3a2508; }
  .battery { width: 54px; height: 22px; margin: -1px 0 0 134px; border: 3px solid #fff; background: #169b45; color: #fff; font-size: 13.500px; line-height: 15px; text-align: center; flex: none; }
  .plug { margin-left: 7px; }
  .sun { width: 21px; height: 21px; margin-left: 92px; border-radius: 50%; flex: none; background: linear-gradient(135deg, #ffd75a 20%, #ff9a0a 85%); }
  .weather { margin-left: 12px; display: flex; gap: 8px; font-size: 15px; white-space: nowrap; }
  .tray { fill: none; stroke: #222; stroke-width: 1.300; }
  .up { margin-left: 16px; margin-top: -3px; }
  .wifi { margin-left: 8px; }
  .vol { margin-left: 5px; }
  .clock { width: 80px; margin-left: 20px; display: flex; flex-direction: column; align-items: center; font-size: 11.800px; line-height: 20px; }
  .note { position: relative; margin-left: 13px; padding-bottom: 2px; }
  .note b { position: absolute; left: 7px; top: 7px; width: 18px; height: 18px; border: 1px solid #77777b; border-radius: 50%; background: #d2d2d6; font: 600 11px/16px 'Open Sans', sans-serif; text-align: center; }
  .peek { width: 5px; height: 43px; margin-left: auto; border-left: 1px solid #a8a8ac; }
</style>
